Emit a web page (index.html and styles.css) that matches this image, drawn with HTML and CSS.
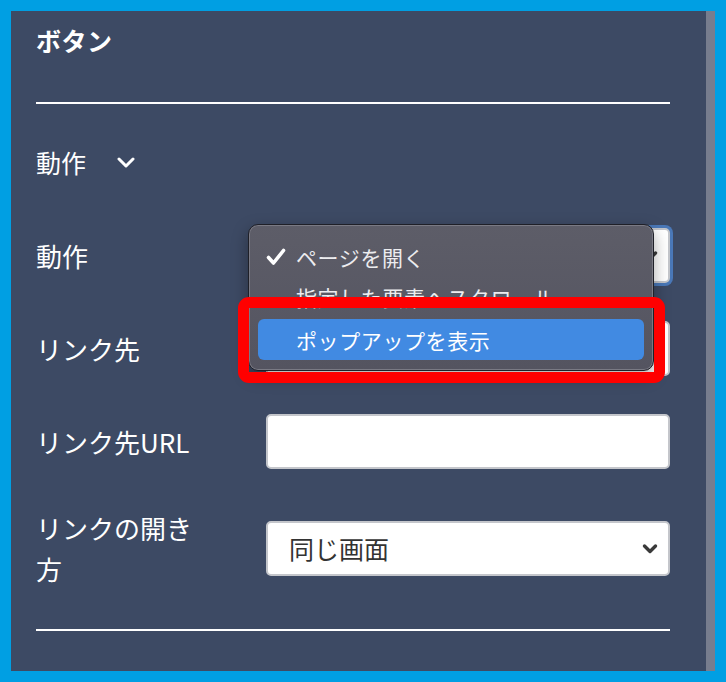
FILE: index.html
```html
<!DOCTYPE html>
<html lang="ja">
<head>
<meta charset="utf-8">
<link rel="stylesheet" href="styles.css">
</head>
<body>
<div class="frame">
  <div class="panel">
    <h2 class="title">ボタン</h2>
    <hr class="rule">
    <div class="section-head">
      <span>動作</span>
      <svg class="chev" width="18" height="12" viewBox="0 0 18 12"><path d="M2 2 L9 9 L16 2" fill="none" stroke="#fff" stroke-width="3" stroke-linecap="round" stroke-linejoin="round"/></svg>
    </div>
    <div class="rows">
      <div class="row">
        <div class="label">動作</div>
        <div class="field select focused"><span></span><svg class="sel-chev" width="16" height="12" viewBox="0 0 16 12"><path d="M2.5 3 L8 8.5 L13.5 3" fill="none" stroke="#3a3a3a" stroke-width="3.4" stroke-linecap="round" stroke-linejoin="round"/></svg></div>
      </div>
      <div class="row">
        <div class="label">リンク先</div>
        <div class="field select"></div>
      </div>
      <div class="row">
        <div class="label">リンク先URL</div>
        <div class="field"></div>
      </div>
      <div class="row">
        <div class="label">リンクの開き方</div>
        <div class="field select"><span>同じ画面</span><svg class="sel-chev" width="16" height="12" viewBox="0 0 16 12"><path d="M2.5 3 L8 8.5 L13.5 3" fill="none" stroke="#3a3a3a" stroke-width="3.4" stroke-linecap="round" stroke-linejoin="round"/></svg></div>
      </div>
    </div>
    <hr class="rule bottom">
  </div>
  <div class="scrollbar"></div>
</div>

<div class="menu">
  <div class="item checked"><svg class="check" width="20" height="18" viewBox="0 0 20 18"><path d="M2.5 9.5 L7.5 15 L17.5 2.5" fill="none" stroke="#fff" stroke-width="3.6" stroke-linecap="round" stroke-linejoin="round"/></svg><span>ページを開く</span></div>
  <div class="item"><span>指定した要素へスクロール</span></div>
  <div class="item active"><span>ポップアップを表示</span></div>
</div>
<div class="highlight-box"></div>
</body>
</html>
```

FILE: styles.css
```css
html, body {
  margin: 0;
  padding: 0;
}
body {
  width: 726px;
  height: 682px;
  background: #009fe3;
  font-family: "Noto Sans CJK JP", "Noto Sans", sans-serif;
  overflow: hidden;
  position: relative;
}
.frame {
  position: absolute;
  left: 11px;
  top: 11px;
  width: 704px;
  height: 660px;
  display: flex;
}
.panel {
  flex: 1;
  background: #3d4a64;
  padding: 0 36px 0 25px;
  color: #fff;
}
.scrollbar {
  width: 9px;
  background: #777d8e;
}
.title {
  margin: 0;
  padding-top: 13px;
  font-size: 25px;
  font-weight: 700;
  line-height: 32px;
  letter-spacing: 0.5px;
}
.rule {
  border: 0;
  height: 2px;
  background: #fff;
  margin: 46px 0 0 0;
}
.rule.bottom {
  margin-top: 40px;
}
.section-head {
  margin-top: 40px;
  display: flex;
  align-items: center;
  gap: 31px;
  font-size: 25px;
  line-height: 36px;
}
.chev {
  margin-top: 2px;
}
.rows {
  margin-top: 48px;
  display: flex;
  flex-direction: column;
  gap: 38px;
}
.row {
  display: flex;
  align-items: center;
}
.label {
  width: 170px;
  margin-right: 60px;
  font-size: 26px;
  line-height: 41px;
}
.field {
  flex: 1;
  height: 55px;
  box-sizing: border-box;
  background: #fff;
  border: 2px solid #c4c6cb;
  border-radius: 5px;
  display: flex;
  align-items: center;
  justify-content: space-between;
  padding: 0 10px 0 21px;
  color: #333;
  font-size: 25px;
}
.focused {
  box-shadow: 0 0 0 3px #4a78b8;
}
.sel-chev {
  margin-top: 1px;
}
.menu {
  position: absolute;
  left: 248px;
  top: 224px;
  width: 406px;
  height: 147px;
  box-sizing: border-box;
  background: linear-gradient(#5d5d68, #545460);
  border: 1px solid #1f2028;
  box-shadow: inset 0 0 0 1px #7a7a84, 0 6px 16px rgba(0,0,0,0.35);
  border-radius: 10px;
  padding: 12px 9px 0 9px;
  color: #ececef;
  font-size: 21px;
}
.item {
  height: 40px;
  display: flex;
  align-items: center;
  padding-left: 38px;
  position: relative;
  border-radius: 6px;
  letter-spacing: 0.6px;
}
.item.active {
  margin-top: 2px;
  height: 41px;
  background: #418ae2;
  color: #fff;
}
.check {
  position: absolute;
  left: 8px;
  top: 11px;
}
.highlight-box {
  position: absolute;
  left: 238px;
  top: 297px;
  width: 427px;
  height: 86px;
  box-sizing: border-box;
  border: 11px solid #ff0000;
  border-radius: 11px;
}
```
